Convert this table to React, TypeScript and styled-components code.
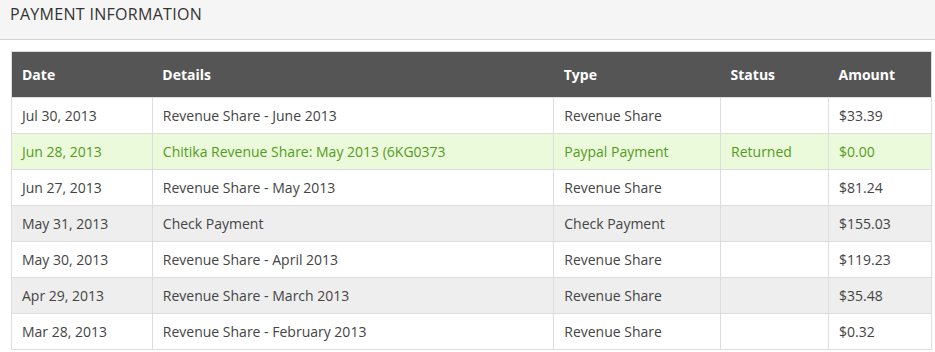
import styled, { createGlobalStyle } from 'styled-components'

const GlobalStyle = createGlobalStyle`
  html, body {
    margin: 0;
    padding: 0;
    background: #fff;
  }
  body {
    font-family: "Open Sans", "Liberation Sans", sans-serif;
    color: #333;
  }
`

const Page = styled.div`
  width: 935px;
`

const Heading = styled.div`
  background: #f5f5f5;
  border-bottom: 1px solid #d4d4d4;
  height: 40px;
  padding: 0 10px;
  display: flex;
  align-items: center;
  box-sizing: border-box;
  margin-bottom: 11px;
`

const Title = styled.h2`
  margin: 0 0 11px;
  font-size: 16px;
  font-weight: 400;
  letter-spacing: 0.3px;
  color: #333;
`

const Table = styled.table`
  margin-left: 11px;
  width: 921px;
  border-collapse: collapse;
  border: 1px solid #ddd;
  font-size: 14px;
`

const Th = styled.th<{ $w: number }>`
  width: ${({ $w }) => $w}px;
  background: #555;
  color: #fff;
  font-weight: 700;
  text-align: left;
  height: 46px;
  padding: 0 10px;
  box-sizing: border-box;
`

const Row = styled.tr<{ $tone?: 'stripe' | 'success' }>`
  background: ${({ $tone }) =>
    $tone === 'stripe' ? '#eeeeee' : $tone === 'success' ? '#eafadb' : '#fff'};
  color: ${({ $tone }) => ($tone === 'success' ? '#559a20' : '#444')};
`

const Td = styled.td`
  height: 36px;
  padding: 0 10px;
  border: 1px solid #ddd;
  box-sizing: border-box;
`

const cols = [
  { name: 'Date', w: 141 },
  { name: 'Details', w: 402 },
  { name: 'Type', w: 167 },
  { name: 'Status', w: 108 },
  { name: 'Amount', w: 103 },
]

type Payment = {
  date: string
  details: string
  type: string
  status: string
  amount: string
  tone?: 'stripe' | 'success'
}

const payments: Payment[] = [
  { date: 'Jul 30, 2013', details: 'Revenue Share - June 2013', type: 'Revenue Share', status: '', amount: '$33.39' },
  { date: 'Jun 28, 2013', details: 'Chitika Revenue Share: May 2013 (6KG0373', type: 'Paypal Payment', status: 'Returned', amount: '$0.00', tone: 'success' },
  { date: 'Jun 27, 2013', details: 'Revenue Share - May 2013', type: 'Revenue Share', status: '', amount: '$81.24' },
  { date: 'May 31, 2013', details: 'Check Payment', type: 'Check Payment', status: '', amount: '$155.03', tone: 'stripe' },
  { date: 'May 30, 2013', details: 'Revenue Share - April 2013', type: 'Revenue Share', status: '', amount: '$119.23' },
  { date: 'Apr 29, 2013', details: 'Revenue Share - March 2013', type: 'Revenue Share', status: '', amount: '$35.48', tone: 'stripe' },
  { date: 'Mar 28, 2013', details: 'Revenue Share - February 2013', type: 'Revenue Share', status: '', amount: '$0.32' },
]

function App() {
  return (
    <>
      <GlobalStyle />
      <Page>
        <Heading>
          <Title>PAYMENT INFORMATION</Title>
        </Heading>
        <Table>
          <thead>
            <tr>
              {cols.map((c) => (
                <Th key={c.name} $w={c.w}>
                  {c.name}
                </Th>
              ))}
            </tr>
          </thead>
          <tbody>
            {payments.map((p, i) => (
              <Row key={i} $tone={p.tone}>
                <Td>{p.date}</Td>
                <Td>{p.details}</Td>
                <Td>{p.type}</Td>
                <Td>{p.status}</Td>
                <Td>{p.amount}</Td>
              </Row>
            ))}
          </tbody>
        </Table>
      </Page>
    </>
  )
}

export default App
